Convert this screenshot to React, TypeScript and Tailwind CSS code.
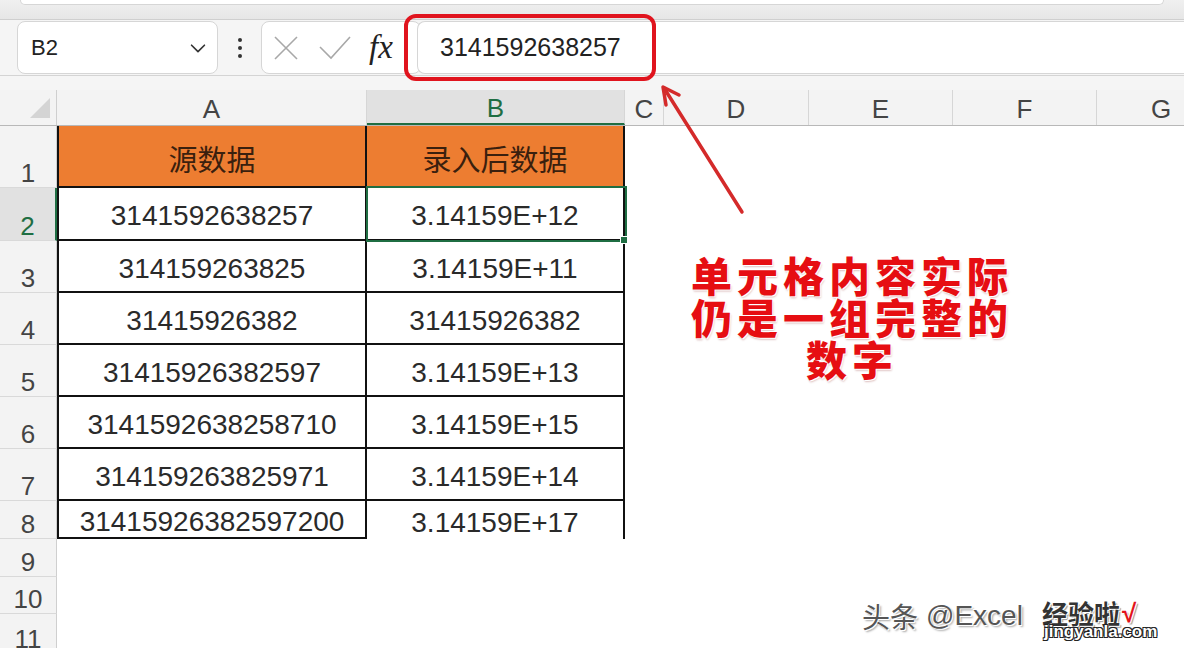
// Excel-style sheet: formula bar + small table, with a red annotation overlay

const SANS = "font-['Liberation_Sans','Noto_Sans_CJK_SC',sans-serif]";
const CJK = "font-['Noto_Sans_CJK_SC',sans-serif]";

const cols = [
  { name: "A", w: "w-[310px]" },
  { name: "B", w: "w-[258px]" },
  { name: "C", w: "w-[39px]" },
  { name: "D", w: "w-[145px]" },
  { name: "E", w: "w-[144px]" },
  { name: "F", w: "w-[144px]" },
];

const data: [string, string][] = [
  ["3141592638257", "3.14159E+12"],
  ["314159263825", "3.14159E+11"],
  ["31415926382", "31415926382"],
  ["31415926382597", "3.14159E+13"],
  ["3141592638258710", "3.14159E+15"],
  ["314159263825971", "3.14159E+14"],
  ["31415926382597200", "3.14159E+17"],
];

const rowH = ["h-[53px]", "h-[52px]", "h-[52px]", "h-[52px]", "h-[52px]", "h-[52px]", "h-[38px]"];

function RowHead({ n, active }: { n: number; active?: boolean }) {
  return (
    <div
      className={`w-[57px] shrink-0 flex items-end justify-center pb-[1px] border-b border-[#d9d9d9] text-[26px] leading-none ${
        active ? "bg-[#e1e1e1] text-[#1f6e43] border-r-2 border-r-[#1f6e43]" : "bg-[#f3f3f3] text-[#444] border-r border-r-[#cfcfcf]"
      }`}
    >
      {n}
    </div>
  );
}

export default function App() {
  return (
    <div className={`relative w-[1184px] h-[648px] overflow-hidden bg-white ${SANS}`}>
      {/* window chrome strip */}
      <div className="h-[20px] bg-gradient-to-b from-[#f0f0f0] to-[#e6e6e6] border-b border-[#cfcfcf] px-[20px]">
        <div className="h-[5px] bg-white rounded-b-xl border-b border-x border-[#d6d6d6]" />
      </div>

      {/* formula bar */}
      <div className="h-[56px] bg-[#f5f5f5] flex items-center border-b border-[#d4d4d4]">
        <div className="ml-[17px] w-[201px] h-[53px] bg-white border border-[#d6d6d6] rounded-lg flex items-center justify-between pl-[13px] pr-[8px]">
          <span className="text-[22px] text-[#222]">B2</span>
          <svg className="w-[22px] h-[22px]" viewBox="0 0 24 24" fill="none" stroke="#333" strokeWidth={1.8} strokeLinecap="round" strokeLinejoin="round">
            <path d="M5 9l7 7 7-7" />
          </svg>
        </div>
        <div className="w-[43px] flex flex-col items-center gap-[4px]">
          <span className="w-[4px] h-[4px] rounded-full bg-[#333]" />
          <span className="w-[4px] h-[4px] rounded-full bg-[#333]" />
          <span className="w-[4px] h-[4px] rounded-full bg-[#333]" />
        </div>
        <div className="w-[160px] h-[53px] bg-white border border-[#d6d6d6] rounded-lg flex items-center pl-[10px]">
          <svg className="w-[28px] h-[28px]" viewBox="0 0 28 28" fill="none" stroke="#a8a8a8" strokeWidth={1.6}>
            <path d="M3 3l22 22M25 3L3 25" />
          </svg>
          <svg className="ml-[18px] w-[34px] h-[26px]" viewBox="0 0 34 26" fill="none" stroke="#a8a8a8" strokeWidth={1.6}>
            <path d="M2 12l11 11L32 2" />
          </svg>
          <span className="ml-[17px] font-['Liberation_Serif',serif] italic text-[33px] text-[#222] leading-none">fx</span>
        </div>
        <div className="ml-[-4px] flex-1 h-[53px] bg-white border border-r-0 border-[#d6d6d6] rounded-l-lg flex items-center pl-[22px]">
          <span className="text-[25px] text-[#222]">3141592638257</span>
        </div>
      </div>

      <div className="h-[14px] bg-[#f5f5f5]" />

      {/* column headers */}
      <div className="h-[36px] flex bg-[#f3f3f3] border-b border-[#b8b8b8]">
        <div className="w-[57px] shrink-0 border-r border-[#cfcfcf] flex items-center justify-end pr-[6px]">
          <div className="w-0 h-0 border-l-[20px] border-l-transparent border-b-[20px] border-b-[#d4d4d4]" />
        </div>
        {cols.map((c) => (
          <div
            key={c.name}
            className={`${c.w} shrink-0 flex items-center justify-center pt-[3px] text-[26px] leading-none border-r border-[#d6d6d6] ${
              c.name === "B" ? "bg-[#e1e1e1] text-[#1f6e43] border-b-2 border-b-[#1f6e43]" : "text-[#444]"
            }`}
          >
            {c.name}
          </div>
        ))}
        <div className="flex-1 flex items-center pt-[3px] pl-[54px] text-[26px] leading-none text-[#444]">G</div>
      </div>

      {/* row 1: headers */}
      <div className="h-[62px] flex">
        <RowHead n={1} />
        <div className={`w-[310px] shrink-0 bg-[#ed7d31] border-x-2 border-b-2 border-[#111] flex items-center justify-center pt-[5px] text-[29px] text-[#3a200e] ${CJK}`}>
          源数据
        </div>
        <div className={`w-[258px] shrink-0 bg-[#ed7d31] border-r-2 border-b-2 border-[#111] flex items-center justify-center pt-[5px] text-[29px] text-[#3a200e] ${CJK}`}>
          录入后数据
        </div>
      </div>

      {/* data rows */}
      {data.map(([a, b], i) => {
        const last = i === data.length - 1;
        return (
          <div key={i} className={`${rowH[i]} flex`}>
            <RowHead n={i + 2} active={i === 0} />
            <div className="w-[310px] shrink-0 border-x-2 border-b-2 border-[#111] flex items-center justify-center pt-[5px] text-[28px] text-[#2a2a2a]">
              {a}
            </div>
            <div className={`w-[258px] shrink-0 border-r-2 border-[#111] ${last ? "" : "border-b-2"} flex items-center justify-center pt-[5px] text-[28px] text-[#2a2a2a]`}>
              {b}
            </div>
          </div>
        );
      })}

      {/* empty rows */}
      <div className="h-[38px] flex"><RowHead n={9} /></div>
      <div className="h-[37px] flex"><RowHead n={10} /></div>
      <div className="h-[40px] flex"><RowHead n={11} /></div>

      {/* selection box on B2 */}
      <div className="absolute left-[366px] top-[186px] w-[261px] h-[56px] border-2 border-[#1f6e43]" />
      <div className="absolute left-[620px] top-[236px] w-[8px] h-[8px] bg-[#1f6e43] border border-white" />

      {/* red frame around formula value */}
      <div className="absolute left-[404px] top-[14px] w-[252px] h-[67px] border-[4px] border-[#e0141e] rounded-xl" />

      {/* arrow */}
      <svg className="absolute left-0 top-0 w-[1184px] h-[648px] pointer-events-none" viewBox="0 0 1184 648" fill="none">
        <path d="M742 212L664 88" stroke="#d42a2a" strokeWidth={3.5} strokeLinecap="round" />
        <path d="M666 105L663 87L679 95" stroke="#d42a2a" strokeWidth={3.5} strokeLinecap="round" strokeLinejoin="round" />
      </svg>

      {/* annotation */}
      <div
        className={`absolute left-[678px] top-[253px] w-[348px] text-center text-[41px] leading-[42px] font-black tracking-[5px] text-[#e60e12] [text-shadow:1px_1px_0_#fff,-1px_-1px_0_#fff,1px_2px_2px_rgba(120,0,0,0.25)] ${CJK}`}
      >
        <div>单元格内容实际</div>
        <div>仍是一组完整的</div>
        <div>数字</div>
      </div>

      {/* watermark */}
      <div className="absolute left-[862px] top-[598px] flex items-center text-[28px] leading-[36px] text-[#555] [text-shadow:1px_1px_0_#fff,-1px_-1px_0_#fff,2px_2px_2px_rgba(0,0,0,0.35)]">
        <span className={CJK}>头条</span>
        <span className="ml-[8px]">@Excel</span>
      </div>
      <div className={`absolute left-[1042px] top-[598px] flex items-start text-[26px] leading-[30px] font-bold text-[#333] [text-shadow:1px_1px_0_#fff,-1px_-1px_0_#fff,2px_2px_1px_rgba(0,0,0,0.4)] ${CJK}`}>
        <span>经验啦</span>
        <span className="ml-[2px] text-[#e3141b] font-['Liberation_Sans',sans-serif]">√</span>
      </div>
      <div className="absolute left-[1044px] top-[623px] text-[17px] leading-none font-bold text-white [text-shadow:1px_1px_0_#222,-1px_-1px_0_#222,1px_-1px_0_#222,-1px_1px_0_#222] font-['Liberation_Sans',sans-serif]">
        jingyanla.com
      </div>
    </div>
  );
}
